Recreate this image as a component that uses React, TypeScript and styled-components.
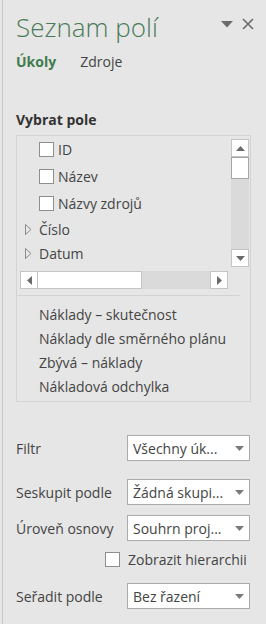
import React from 'react';
import styled, { createGlobalStyle } from 'styled-components';

const Global = createGlobalStyle`
  html, body { margin: 0; padding: 0; background: #e6e6e6; }
  body { font-family: "Open Sans", "Noto Sans", sans-serif; }
  * { box-sizing: border-box; }
`;

const Panel = styled.div`
  width: 264px;
  height: 624px;
  margin-left: 2px;
  border-left: 1px solid #c9c9c9;
  padding: 0 15px 0 13px;
  display: flex;
  flex-direction: column;
  color: #444;
  font-size: 14px;
  overflow: hidden;
`;

const Header = styled.div`
  display: flex;
  justify-content: space-between;
  align-items: flex-start;
  margin-top: 11px;
  height: 32px;
`;

const Title = styled.div`
  font-size: 26px;
  font-weight: 300;
  line-height: 32px;
  color: #4a7b57;
  white-space: nowrap;
`;

const HeaderIcons = styled.div`
  display: flex;
  align-items: center;
  gap: 9px;
  margin-top: 7px;
  margin-right: -3px;
`;

const Tabs = styled.div`
  display: flex;
  gap: 24px;
  margin-top: 9px;
  line-height: 20px;
`;

const Tab = styled.div<{ $active?: boolean }>`
  font-weight: ${(p) => (p.$active ? 700 : 400)};
  color: ${(p) => (p.$active ? '#3f7b4c' : '#444')};
`;

const SectionLabel = styled.div`
  margin-top: 38px;
  line-height: 20px;
  font-weight: 700;
  color: #333;
`;

const FieldBox = styled.div`
  margin-top: 5px;
  border: 1px solid #d3d3d3;
  display: flex;
  flex-direction: column;
`;

const TreeArea = styled.div`
  display: grid;
  grid-template-columns: 1fr 18px;
  grid-template-rows: 128px 18px;
  column-gap: 3px;
  row-gap: 4px;
  padding: 3px 1px 6px 3px;
`;

const Viewport = styled.div`
  overflow: hidden;
  display: flex;
  flex-direction: column;
`;

const CheckRow = styled.div<{ $last?: boolean }>`
  flex: none;
  height: 21px;
  margin-bottom: ${(p) => (p.$last ? 3 : 6)}px;
  display: flex;
  align-items: center;
  padding-left: 19px;
  gap: 4px;
  white-space: nowrap;
`;

const Box = styled.span`
  flex: none;
  width: 15px;
  height: 15px;
  background: #fff;
  border: 1px solid #8e8e8e;
`;

const GroupRow = styled.div`
  flex: none;
  height: 24px;
  display: flex;
  align-items: center;
  white-space: nowrap;
`;

const Expander = styled.span`
  width: 19px;
  padding-left: 5px;
  display: flex;
  align-items: center;
`;

const VScroll = styled.div`
  display: flex;
  flex-direction: column;
  background: #dadada;
`;

const HScroll = styled.div`
  display: flex;
  background: #dadada;
`;

const ScrollBtn = styled.div`
  flex: none;
  width: 18px;
  height: 18px;
  background: #fff;
  border: 1px solid #c4c4c4;
  display: flex;
  align-items: center;
  justify-content: center;
`;

const VThumb = styled.div`
  height: 22px;
  background: #fff;
  border: 1px solid #a6a6a6;
`;

const HThumb = styled.div`
  width: 104px;
  background: #fff;
  border: 1px solid #c4c4c4;
  border-left: none;
`;

const Spacer = styled.div`
  flex: 1;
`;

const Separator = styled.div`
  height: 1px;
  margin-right: 10px;
  background: #d3d3d3;
`;

const AreaList = styled.div`
  padding: 7px 0 2px 22px;
  display: flex;
  flex-direction: column;
`;

const AreaItem = styled.div`
  line-height: 24px;
  white-space: nowrap;
`;

const FormRow = styled.div<{ $top: number }>`
  margin-top: ${(p) => p.$top}px;
  display: flex;
  align-items: center;
  height: 26px;
`;

const FormLabel = styled.div`
  width: 111px;
  flex: none;
  white-space: nowrap;
`;

const Select = styled.div`
  width: 123px;
  height: 26px;
  background: #fff;
  border: 1px solid #ababab;
  display: flex;
  align-items: center;
  padding: 0 5px 0 5px;
  white-space: nowrap;
`;

const SelectText = styled.span`
  flex: 1;
  overflow: hidden;
`;

const CheckLine = styled.div`
  margin-top: 11px;
  height: 15px;
  display: flex;
  align-items: center;
  gap: 8px;
  padding-left: 89px;
  white-space: nowrap;
`;

const Tri = ({ dir }: { dir: 'up' | 'down' | 'left' | 'right' }) => {
  const pts =
    dir === 'up'
      ? '0,5 4.5,0 9,5'
      : dir === 'down'
      ? '0,0 9,0 4.5,5'
      : dir === 'left'
      ? '5,0 5,9 0,4.5'
      : '0,0 0,9 5,4.5';
  const w = dir === 'up' || dir === 'down' ? 9 : 5;
  const h = dir === 'up' || dir === 'down' ? 5 : 9;
  return (
    <svg width={w} height={h} viewBox={`0 0 ${w} ${h}`}>
      <polygon points={pts} fill="#6a6a6a" />
    </svg>
  );
};

const OutlineTri = () => (
  <svg width="7" height="11" viewBox="0 0 7 11">
    <polygon points="0.5,0.5 6,5.5 0.5,10.5" fill="none" stroke="#8a8a8a" strokeWidth="1" />
  </svg>
);

const DropArrow = () => (
  <svg width="9" height="5" viewBox="0 0 9 5">
    <polygon points="0,0 9,0 4.5,5" fill="#7a7a7a" />
  </svg>
);

const Dropdown = ({ text }: { text: string }) => (
  <Select>
    <SelectText>{text}</SelectText>
    <DropArrow />
  </Select>
);

export default function App() {
  return (
    <>
      <Global />
      <Panel>
        <Header>
          <Title>Seznam polí</Title>
          <HeaderIcons>
            <svg width="12" height="7" viewBox="0 0 12 7">
              <polygon points="0,0 12,0 6,6.5" fill="#6b6b6b" />
            </svg>
            <svg width="12" height="12" viewBox="0 0 12 12">
              <path d="M1 1 L11 11 M11 1 L1 11" stroke="#6b6b6b" strokeWidth="1.6" />
            </svg>
          </HeaderIcons>
        </Header>
        <Tabs>
          <Tab $active>Úkoly</Tab>
          <Tab>Zdroje</Tab>
        </Tabs>
        <SectionLabel>Vybrat pole</SectionLabel>
        <FieldBox>
          <TreeArea>
            <Viewport>
              <CheckRow>
                <Box />
                ID
              </CheckRow>
              <CheckRow>
                <Box />
                Název
              </CheckRow>
              <CheckRow $last>
                <Box />
                Názvy zdrojů
              </CheckRow>
              <GroupRow>
                <Expander>
                  <OutlineTri />
                </Expander>
                Číslo
              </GroupRow>
              <GroupRow>
                <Expander>
                  <OutlineTri />
                </Expander>
                Datum
              </GroupRow>
              <GroupRow>
                <Expander>
                  <OutlineTri />
                </Expander>
              </GroupRow>
            </Viewport>
            <VScroll>
              <ScrollBtn>
                <Tri dir="up" />
              </ScrollBtn>
              <VThumb />
              <Spacer />
              <ScrollBtn>
                <Tri dir="down" />
              </ScrollBtn>
            </VScroll>
            <HScroll>
              <ScrollBtn>
                <Tri dir="left" />
              </ScrollBtn>
              <HThumb />
              <Spacer />
              <ScrollBtn>
                <Tri dir="right" />
              </ScrollBtn>
            </HScroll>
          </TreeArea>
          <Separator />
          <AreaList>
            <AreaItem>Náklady – skutečnost</AreaItem>
            <AreaItem>Náklady dle směrného plánu</AreaItem>
            <AreaItem>Zbývá – náklady</AreaItem>
            <AreaItem>Nákladová odchylka</AreaItem>
          </AreaList>
        </FieldBox>
        <FormRow $top={33}>
          <FormLabel>Filtr</FormLabel>
          <Dropdown text="Všechny úk..." />
        </FormRow>
        <FormRow $top={18}>
          <FormLabel>Seskupit podle</FormLabel>
          <Dropdown text="Žádná skupi..." />
        </FormRow>
        <FormRow $top={10}>
          <FormLabel>Úroveň osnovy</FormLabel>
          <Dropdown text="Souhrn proj..." />
        </FormRow>
        <CheckLine>
          <Box />
          Zobrazit hierarchii
        </CheckLine>
        <FormRow $top={16}>
          <FormLabel>Seřadit podle</FormLabel>
          <Dropdown text="Bez řazení" />
        </FormRow>
      </Panel>
    </>
  );
}
